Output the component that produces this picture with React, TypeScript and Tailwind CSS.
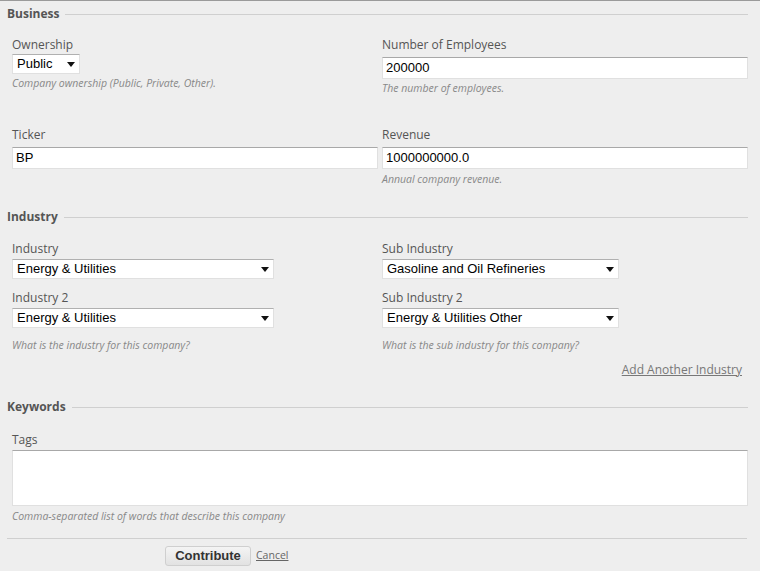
import React from "react";

const Arrow = () => (
  <svg width="8" height="5" viewBox="0 0 8 5" className="shrink-0">
    <path d="M0 0 H8 L4 5 Z" fill="#111" />
  </svg>
);

const Header = ({ title }: { title: string }) => (
  <div className="flex items-center pl-[7px] pr-[12px] h-[16px]">
    <span className="text-[12px] leading-[16px] font-bold text-[#555]">{title}</span>
    <div className="flex-1 h-px bg-[#cfcfcf] ml-[6px]" />
  </div>
);

const Label = ({ children }: { children: React.ReactNode }) => (
  <div className="text-[12px] leading-[16px] text-[#555]">{children}</div>
);

const Help = ({ children }: { children: React.ReactNode }) => (
  <div className="text-[10.5px] leading-[12px] italic text-[#888]">{children}</div>
);

const Input = ({ value }: { value: string }) => (
  <div className="h-[22px] bg-white border border-[#e0e0e0] border-t-[#a8a8a8] flex items-center px-[3px] text-[13px] text-black" style={{ fontFamily: '"Liberation Sans", Arial, sans-serif' }}>
    {value}
  </div>
);

const Select = ({ value, w }: { value: string; w: string }) => (
  <div className={`h-[20px] bg-white border border-[#e0e0e0] border-t-[#b0b0b0] flex items-center justify-between pl-[4px] pr-[4px] text-[13px] text-black ${w}`} style={{ fontFamily: '"Liberation Sans", Arial, sans-serif' }}>
    <span>{value}</span>
    <Arrow />
  </div>
);

export default function App() {
  return (
    <div className="w-[760px] h-[571px] bg-[#eeeeee] border-t border-[#9a9a9a] overflow-hidden" style={{ fontFamily: '"Open Sans", "Noto Sans", sans-serif' }}>
      <div className="mt-[5px]">
        <Header title="Business" />
      </div>

      <div className="grid grid-cols-2 gap-x-[4px] pl-[12px] pr-[12px] mt-[15px] items-start">
        <div className="flex flex-col">
          <Label>Ownership</Label>
          <div className="mt-[1px]">
            <Select value="Public" w="w-[68px]" />
          </div>
          <div className="mt-[3px]">
            <Help>Company ownership (Public, Private, Other).</Help>
          </div>
        </div>
        <div className="flex flex-col">
          <Label>Number of Employees</Label>
          <div className="mt-[4px]">
            <Input value="200000" />
          </div>
          <div className="mt-[3px]">
            <Help>The number of employees.</Help>
          </div>
        </div>
      </div>

      <div className="grid grid-cols-2 gap-x-[4px] pl-[12px] pr-[12px] mt-[33px] items-start">
        <div className="flex flex-col">
          <Label>Ticker</Label>
          <div className="mt-[4px]">
            <Input value="BP" />
          </div>
        </div>
        <div className="flex flex-col">
          <Label>Revenue</Label>
          <div className="mt-[4px]">
            <Input value="1000000000.0" />
          </div>
          <div className="mt-[4px]">
            <Help>Annual company revenue.</Help>
          </div>
        </div>
      </div>

      <div className="mt-[24px]">
        <Header title="Industry" />
      </div>

      <div className="grid grid-cols-2 gap-x-[4px] pl-[12px] pr-[12px] mt-[16px] items-start">
        <div className="flex flex-col">
          <Label>Industry</Label>
          <div className="mt-[2px]">
            <Select value="Energy & Utilities" w="w-[262px]" />
          </div>
          <div className="mt-[11px]">
            <Label>Industry 2</Label>
          </div>
          <div className="mt-[2px]">
            <Select value="Energy & Utilities" w="w-[262px]" />
          </div>
          <div className="mt-[11px]">
            <Help>What is the industry for this company?</Help>
          </div>
        </div>
        <div className="flex flex-col">
          <Label>Sub Industry</Label>
          <div className="mt-[2px]">
            <Select value="Gasoline and Oil Refineries" w="w-[237px]" />
          </div>
          <div className="mt-[11px]">
            <Label>Sub Industry 2</Label>
          </div>
          <div className="mt-[2px]">
            <Select value="Energy & Utilities Other" w="w-[237px]" />
          </div>
          <div className="mt-[11px]">
            <Help>What is the sub industry for this company?</Help>
          </div>
        </div>
      </div>

      <div className="flex justify-end pr-[18px] mt-[11px]">
        <a className="text-[12px] leading-[16px] text-[#777] underline">Add Another Industry</a>
      </div>

      <div className="mt-[21px]">
        <Header title="Keywords" />
      </div>

      <div className="pl-[12px] pr-[12px] mt-[17px] flex flex-col">
        <Label>Tags</Label>
        <div className="mt-[2px] h-[56px] bg-white border border-[#e0e0e0] border-t-[#a8a8a8]" />
        <div className="mt-[4px]">
          <Help>Comma-separated list of words that describe this company</Help>
        </div>
      </div>

      <div className="ml-[7px] mr-[13px] mt-[16px] h-px bg-[#cfcfcf]" />

      <div className="flex items-center mt-[7px] pl-[165px]">
        <button className="h-[20px] w-[86px] rounded-[3px] border border-[#cfcfcf] bg-gradient-to-b from-[#f4f4f4] to-[#e2e2e2] text-[13px] font-bold text-[#333] flex items-center justify-center" style={{ fontFamily: '"Liberation Sans", Arial, sans-serif' }}>
          Contribute
        </button>
        <a className="ml-[5px] text-[10.5px] text-[#666] underline">Cancel</a>
      </div>
    </div>
  );
}
